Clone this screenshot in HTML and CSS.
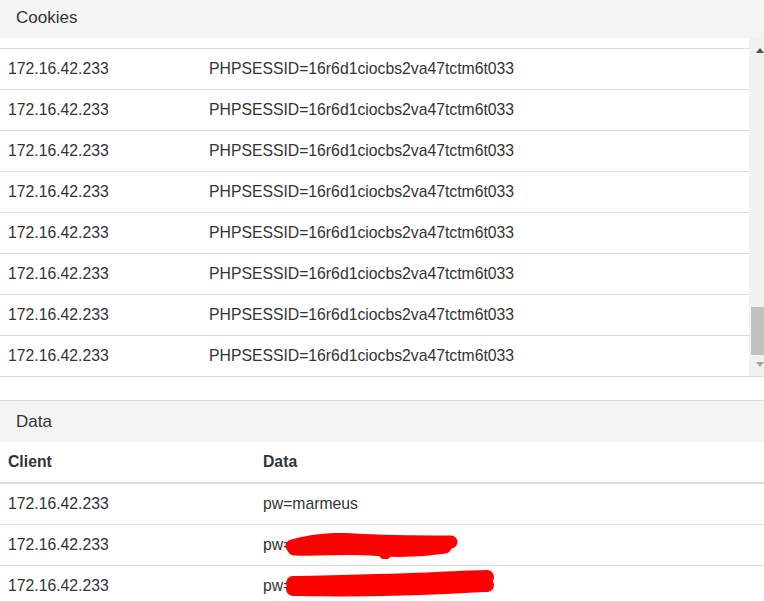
FILE: index.html
```html
<!DOCTYPE html>
<html lang="en">
<head>
    <meta charset="UTF-8">
    <meta name="viewport" content="width=device-width, initial-scale=1.0">
    <title>Logs</title>
    <link rel="stylesheet" href="styles.css">
</head>
<body>
<div class="panel panel-cookies">
    <div class="panel-heading">Cookies</div>
    <div class="scroll">
        <div class="viewport">
            <table class="table cookies">
                <tbody>
                <tr><td>172.16.42.233</td><td>PHPSESSID=16r6d1ciocbs2va47tctm6t033</td></tr>
                <tr><td>172.16.42.233</td><td>PHPSESSID=16r6d1ciocbs2va47tctm6t033</td></tr>
                <tr><td>172.16.42.233</td><td>PHPSESSID=16r6d1ciocbs2va47tctm6t033</td></tr>
                <tr><td>172.16.42.233</td><td>PHPSESSID=16r6d1ciocbs2va47tctm6t033</td></tr>
                <tr><td>172.16.42.233</td><td>PHPSESSID=16r6d1ciocbs2va47tctm6t033</td></tr>
                <tr><td>172.16.42.233</td><td>PHPSESSID=16r6d1ciocbs2va47tctm6t033</td></tr>
                <tr><td>172.16.42.233</td><td>PHPSESSID=16r6d1ciocbs2va47tctm6t033</td></tr>
                <tr><td>172.16.42.233</td><td>PHPSESSID=16r6d1ciocbs2va47tctm6t033</td></tr>
                </tbody>
            </table>
        </div>
        <!-- scrollbar, scrolled to the end -->
        <div class="scrollbar">
            <div class="sb-btn up"><span class="arrow-up"></span></div>
            <div class="sb-track"><div class="sb-thumb"></div></div>
            <div class="sb-btn down"><span class="arrow-down"></span></div>
        </div>
    </div>
</div>

<div class="panel panel-data">
    <div class="panel-heading">Data</div>
    <table class="table data">
        <thead>
        <tr><th>Client</th><th>Data</th></tr>
        </thead>
        <tbody>
        <tr><td>172.16.42.233</td><td>pw=marmeus</td></tr>
        <tr>
            <td>172.16.42.233</td>
            <td class="secret">pw=<span class="hidden">xxxxxxxxxxxxxxxxxxxx</span>
                <!-- redacted -->
                <svg class="scribble s1" width="174" height="26" viewBox="0 0 174 26">
                    <path d="M7,13 C25,8 45,5 70,7 C100,9 130,9 166,9" />
                    <path d="M9,16 C40,17 60,14 85,16 C115,19 140,17 160,14" />
                    <path d="M40,12 C80,11 120,12 150,11" />
                    <path d="M98,17 L100,20" />
                </svg>
            </td>
        </tr>
        <tr>
            <td>172.16.42.233</td>
            <td class="secret">pw=<span class="hidden">xxxxxxxxxxxxxxxxxxxxxxxx</span>
                <svg class="scribble s2" width="208" height="28" viewBox="0 0 208 28">
                    <path d="M7,13 C50,12 110,11 150,9 C170,8 190,7 201,7" />
                    <path d="M7,19 C60,20 120,19 160,17 C180,16 195,15 201,15" />
                </svg>
            </td>
        </tr>
        </tbody>
    </table>
</div>
</body>
</html>
```

FILE: styles.css
```css
body {
    font-family: "Liberation Sans", Arial, sans-serif;
    font-size: 15.75px;
    color: #333;
    background-color: #fff;
    margin: 0;
    padding: 0;
}
.panel {
    background-color: #fff;
    border-bottom: 1px solid #ddd;
}
.panel-cookies {
    margin-bottom: 23px;
}
.panel-data {
    border-top: 1px solid #ddd;
    border-bottom: none;
}
.panel-heading {
    background-color: #f4f4f4;
    padding: 0 16px;
    font-size: 17px;
}
.panel-cookies .panel-heading {
    height: 38px;
    line-height: 35px;
}
.panel-data .panel-heading {
    height: 41px;
    line-height: 41px;
}
.scroll {
    height: 338px;
    display: flex;
}
.viewport {
    flex: 1;
    overflow: hidden;
    display: flex;
    flex-direction: column;
    justify-content: flex-end;
}
.scrollbar {
    width: 15px;
    background-color: #f1f1f1;
    display: flex;
    flex-direction: column;
}
.sb-btn {
    height: 17px;
    display: flex;
    justify-content: flex-end;
    padding-right: 0;
}
.sb-btn.up {
    align-items: flex-end;
    padding-bottom: 2px;
    height: 15px;
}
.sb-btn.down {
    align-items: flex-start;
    padding-top: 3px;
    height: 14px;
}
.arrow-up {
    width: 0;
    height: 0;
    border-left: 4.5px solid transparent;
    border-right: 4.5px solid transparent;
    border-bottom: 5px solid #505050;
}
.arrow-down {
    width: 0;
    height: 0;
    border-left: 4.5px solid transparent;
    border-right: 4.5px solid transparent;
    border-top: 5px solid #a3a3a3;
}
.sb-track {
    flex: 1;
    display: flex;
    flex-direction: column;
    justify-content: flex-end;
    padding: 0 0 4px 2px;
}
.sb-thumb {
    height: 48px;
    background-color: #c1c1c1;
}
.table {
    width: 100%;
    border-collapse: collapse;
}
.table td, .table th {
    padding: 8px;
    line-height: 24px;
    text-align: left;
    vertical-align: top;
    border-top: 1px solid #ddd;
}
.cookies td:first-child {
    width: 185px;
}
.data td:first-child, .data th:first-child {
    width: 239px;
}
.data th {
    border-top: none;
    border-bottom: 2px solid #ddd;
    font-weight: bold;
}
.data tbody tr:first-child td {
    border-top: none;
}
.secret {
    position: relative;
}
.hidden {
    color: #333;
}
.scribble {
    position: absolute;
    fill: none;
    stroke: #ff0000;
    stroke-linecap: round;
    stroke-linejoin: round;
}
.scribble.s1 {
    left: 30px;
    top: 8px;
    stroke-width: 13px;
}
.scribble.s2 {
    left: 31px;
    top: 4px;
    stroke-width: 14px;
}
```
